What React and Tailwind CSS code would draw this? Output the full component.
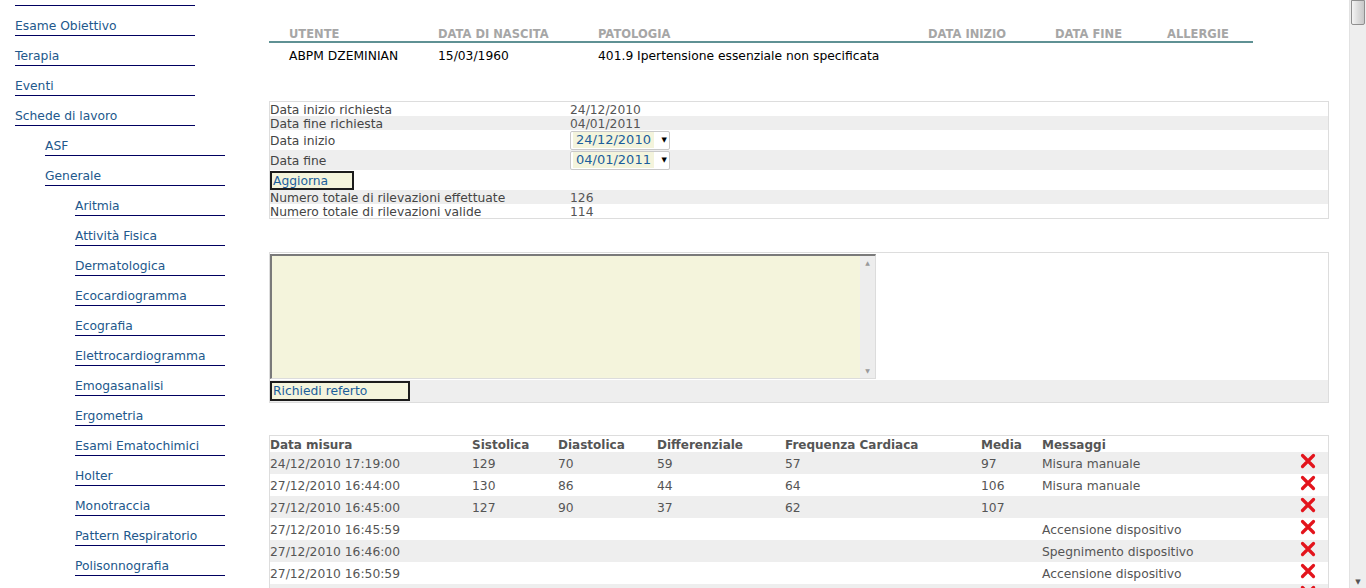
import React from 'react';

const font = "font-['DejaVu_Sans',Verdana,sans-serif]";

const navItems = [
  { label: 'Esame Obiettivo', level: 1 },
  { label: 'Terapia', level: 1 },
  { label: 'Eventi', level: 1 },
  { label: 'Schede di lavoro', level: 1 },
  { label: 'ASF', level: 2 },
  { label: 'Generale', level: 2 },
  { label: 'Aritmia', level: 3 },
  { label: 'Attività Fisica', level: 3 },
  { label: 'Dermatologica', level: 3 },
  { label: 'Ecocardiogramma', level: 3 },
  { label: 'Ecografia', level: 3 },
  { label: 'Elettrocardiogramma', level: 3 },
  { label: 'Emogasanalisi', level: 3 },
  { label: 'Ergometria', level: 3 },
  { label: 'Esami Ematochimici', level: 3 },
  { label: 'Holter', level: 3 },
  { label: 'Monotraccia', level: 3 },
  { label: 'Pattern Respiratorio', level: 3 },
  { label: 'Polisonnografia', level: 3 },
];

const levelClass = {
  1: 'ml-[15px] w-[180px]',
  2: 'ml-[45px] w-[180px]',
  3: 'ml-[75px] w-[150px]',
};

const misure = [
  ['24/12/2010 17:19:00', '129', '70', '59', '57', '97', 'Misura manuale'],
  ['27/12/2010 16:44:00', '130', '86', '44', '64', '106', 'Misura manuale'],
  ['27/12/2010 16:45:00', '127', '90', '37', '62', '107', ''],
  ['27/12/2010 16:45:59', '', '', '', '', '', 'Accensione dispositivo'],
  ['27/12/2010 16:46:00', '', '', '', '', '', 'Spegnimento dispositivo'],
  ['27/12/2010 16:50:59', '', '', '', '', '', 'Accensione dispositivo'],
  ['', '', '', '', '', '', ''],
];

function DeleteIcon() {
  return (
    <svg width="16" height="16" viewBox="0 0 16 16">
      <path d="M2.5 2.5 L13.5 13.5 M13.5 2.5 L2.5 13.5" stroke="#e3141c" strokeWidth="3.2" strokeLinecap="round" />
    </svg>
  );
}

function DateSelect({ value }) {
  return (
    <div className="w-[100px] h-[19px] border border-[#c9c9c9] rounded-[2px] bg-white flex items-center pl-[2px] pr-[2px]">
      <span className="bg-[#f4f4dc] text-[#1b5e9b] text-[13px] px-[3px] leading-[16px]">{value}</span>
      <span className="ml-auto text-[7px] text-black leading-none">▼</span>
    </div>
  );
}

function InfoRow({ label, value, gray, tall, children }) {
  return (
    <div className={`flex ${tall ? 'h-[20px] items-center' : 'h-[14px] leading-[16px]'} ${gray ? 'bg-[#eeeeee]' : 'bg-white'}`}>
      <div className={`w-[300px] text-[#444444] ${tall ? 'pt-[2px]' : ''}`}>{label}</div>
      {children ? children : <div className="text-[#555555]">{value}</div>}
    </div>
  );
}

export default function App() {
  return (
    <div className={`${font} h-[588px] w-[1366px] overflow-hidden bg-white flex text-[12.3px]`}>
      {/* Menu laterale */}
      <nav className="w-[269px] shrink-0">
        <div className="ml-[15px] w-[180px] h-[6px] border-b border-[#000060]" />
        {navItems.map((item) => (
          <div
            key={item.label}
            className={`${levelClass[item.level]} h-[30px] pt-[13px] leading-[15px] border-b border-[#000060] text-[#22588c] whitespace-nowrap`}
          >
            {item.label}
          </div>
        ))}
      </nav>

      {/* Contenuto */}
      <main className="flex-1 pr-[20px] pt-[24px]">
        {/* Intestazione paziente */}
        <div className="w-[984px]">
          <div className="grid grid-cols-[149px_160px_330px_127px_112px_106px] h-[19px] pt-[3px] border-b-2 border-[#5f9194] text-[11.5px] font-bold text-[#a6a6a6] leading-[14px]">
            <div className="pl-[20px]">UTENTE</div>
            <div className="pl-[20px]">DATA DI NASCITA</div>
            <div className="pl-[20px]">PATOLOGIA</div>
            <div className="pl-[20px]">DATA INIZIO</div>
            <div className="pl-[20px]">DATA FINE</div>
            <div className="pl-[20px]">ALLERGIE</div>
          </div>
          <div className="grid grid-cols-[149px_160px_330px_127px_112px_106px] pt-[6px] h-[26px] leading-[15px] text-black whitespace-nowrap">
            <div className="pl-[20px]">ABPM DZEMINIAN</div>
            <div className="pl-[20px]">15/03/1960</div>
            <div className="pl-[20px]">401.9 Ipertensione essenziale non specificata</div>
            <div />
            <div />
            <div />
          </div>
        </div>

        {/* Periodo rilevazioni */}
        <div className="mt-[32px] border border-[#dddddd]">
          <InfoRow label="Data inizio richiesta" value="24/12/2010" />
          <InfoRow label="Data fine richiesta" value="04/01/2011" gray />
          <InfoRow label="Data inizio" tall>
            <DateSelect value="24/12/2010" />
          </InfoRow>
          <InfoRow label="Data fine" gray tall>
            <DateSelect value="04/01/2011" />
          </InfoRow>
          <div className="h-[20px] flex items-end bg-white">
            <button className="w-[84px] h-[19px] border-2 border-[#1c1c1c] bg-[#f4f4dc] text-[#1b5e9b] text-left pl-[1px] leading-[16px]">
              Aggiorna
            </button>
          </div>
          <InfoRow label="Numero totale di rilevazioni effettuate" value="126" gray />
          <InfoRow label="Numero totale di rilevazioni valide" value="114" />
        </div>

        {/* Referto */}
        <div className="mt-[33px] border border-[#dddddd]">
          <div className="pt-[1px]">
            <div className="w-[606px] h-[125px] bg-[#f4f4dc] border-t-2 border-l-2 border-[#7a7a7a] border-r border-b border-r-[#dcdcdc] border-b-[#dcdcdc] flex justify-end">
              <div className="w-[15px] h-full bg-[#ededed] flex flex-col items-center justify-between py-[4px] text-[6px] text-[#9a9a9a] leading-none">
                <span>▲</span>
                <span>▼</span>
              </div>
            </div>
          </div>
          <div className="mt-[1px] h-[22px] bg-[#eeeeee] pt-[1px]">
            <button className="w-[140px] h-[20px] border-2 border-[#1c1c1c] bg-[#f4f4dc] text-[#1b5e9b] text-left pl-[1px] leading-[17px]">
              Richiedi referto
            </button>
          </div>
        </div>

        {/* Misure */}
        <div className="mt-[32px] border border-[#dddddd] text-[#555555]">
          <div className="grid grid-cols-[202px_86px_99px_128px_196px_61px_1fr_30px] h-[16px] pt-[1px] leading-[16px] font-bold text-[12px]">
            <div>Data misura</div>
            <div>Sistolica</div>
            <div>Diastolica</div>
            <div>Differenziale</div>
            <div>Frequenza Cardiaca</div>
            <div>Media</div>
            <div>Messaggi</div>
            <div />
          </div>
          {misure.map((r, i) => (
            <div
              key={i}
              className={`grid grid-cols-[202px_86px_99px_128px_196px_61px_1fr_30px] h-[22px] pt-[2px] items-center ${i % 2 === 0 ? 'bg-[#eeeeee]' : 'bg-white'}`}
            >
              {r.map((c, j) => (
                <div key={j} className="whitespace-nowrap">{c}</div>
              ))}
              <div className="pl-[2px] -mt-[7px]">
                <DeleteIcon />
              </div>
            </div>
          ))}
        </div>
      </main>

      {/* Barra di scorrimento */}
      <div className="w-[17px] shrink-0 bg-[#eeeeee] border-l border-[#e2e2e2] flex flex-col">
        <div className="h-[25px] mx-[1px] rounded-b-[2px] border border-[#8f8f8f] bg-gradient-to-r from-[#f4f4f4] via-[#dcdcdc] to-[#c8c8c8]" />
        <div className="mt-auto mb-[2px] text-center text-[7px] text-[#555555] leading-none">▼</div>
      </div>
    </div>
  );
}
